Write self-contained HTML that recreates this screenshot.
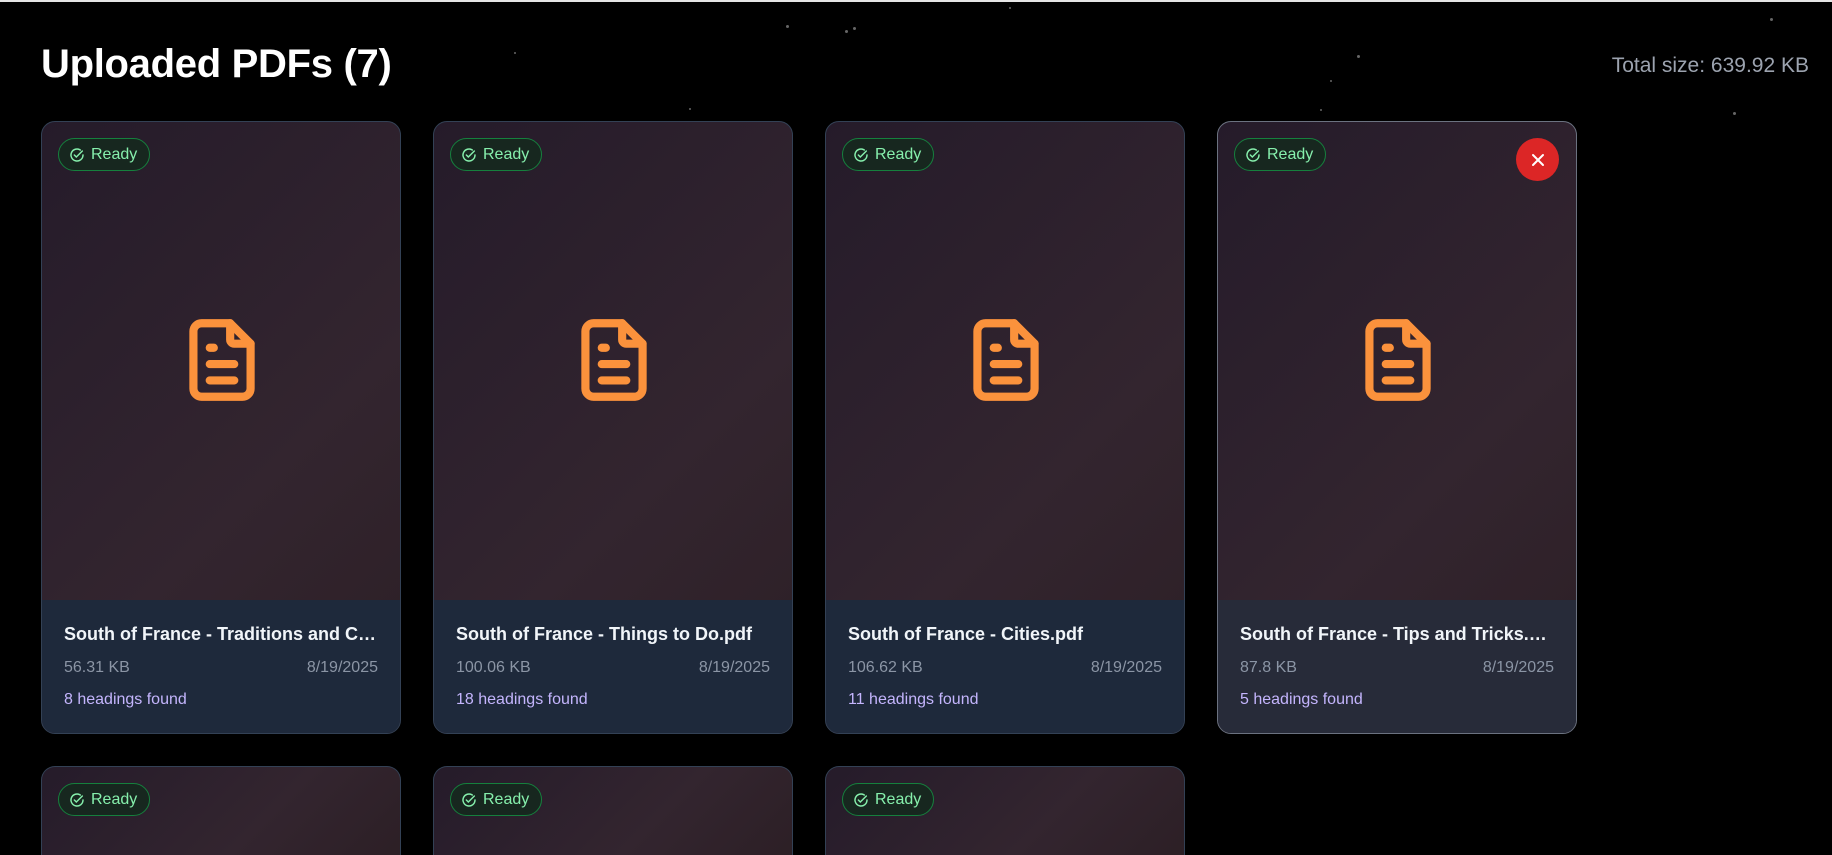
<!DOCTYPE html>
<html><head><meta charset="utf-8"><style>
*{box-sizing:border-box;margin:0;padding:0}
html{width:1832px;height:855px;overflow:hidden;background:#000}
body{width:1832px;height:855px;background:#000;font-family:"Liberation Sans",sans-serif;overflow:hidden;position:relative;border-top:2px solid #e5e5e5}
h1{position:absolute;left:41px;top:40px;font-size:40px;font-weight:bold;color:#fff;letter-spacing:-0.3px}
.total{position:absolute;right:23px;top:52px;font-size:21px;color:#9ca3af}
.star{position:absolute;width:3px;height:3px;border-radius:50%;background:#666}
.card{position:absolute;width:360px;height:613px;border:1px solid #334155;border-radius:14px;overflow:hidden;background:linear-gradient(135deg,#251b2a,#33252f 60%,#2c1f25)}
.card.b{height:100px;border-bottom:none;border-radius:14px 14px 0 0}
.card.h{border-color:#6b7280}
.badge{position:absolute;left:16px;top:16px;height:33px;padding:0 12px 0 10px;border:1px solid #15803d;border-radius:17px;background:#17271f;color:#86efac;font-size:16px;display:flex;align-items:center;gap:6px}
.icon{position:absolute;left:131px;top:189px}
.foot{position:absolute;left:0;right:0;top:478px;bottom:0;background:#1e293b;padding:0 22px}
.card.h .foot{background:#272b39}
.t{margin-top:24px;font-size:18px;font-weight:bold;color:#f1f5f9;white-space:nowrap;overflow:hidden;text-overflow:ellipsis}
.m{margin-top:14px;display:flex;justify-content:space-between;font-size:16px;color:#8b95a5}
.g{margin-top:14px;font-size:16px;color:#c4b5fd}
.x{position:absolute;right:17px;top:16px;width:43px;height:43px;border-radius:50%;background:#dc2626;color:#fff;display:flex;align-items:center;justify-content:center}
</style></head><body>
<h1>Uploaded PDFs (7)</h1>
<div class="total">Total size: 639.92 KB</div>
<div class="star" style="left:786px;top:23px"></div><div class="star" style="left:845px;top:28px"></div><div class="star" style="left:853px;top:25px"></div><div class="star" style="left:1009px;top:5px;width:2px;height:2px"></div><div class="star" style="left:1357px;top:53px"></div><div class="star" style="left:1330px;top:78px;width:2px;height:2px"></div><div class="star" style="left:1770px;top:16px"></div><div class="star" style="left:1733px;top:110px"></div><div class="star" style="left:1320px;top:107px;width:2px;height:2px"></div><div class="star" style="left:689px;top:106px;width:2px;height:2px"></div><div class="star" style="left:514px;top:50px;width:2px;height:2px"></div>
<div class="card" style="left:41px;top:119px"><div class="badge"><svg width="16" height="16" viewBox="0 0 24 24" fill="none" stroke="#86efac" stroke-width="2.2" stroke-linecap="round"><path d="M21 12a9 9 0 1 1-4-7.5"/><path d="M8 12l3 3 9-9"/></svg>Ready</div><svg class="icon" width="98" height="98" viewBox="0 0 24 24" fill="none" stroke="#fb923c" stroke-width="2" stroke-linecap="round" stroke-linejoin="round"><path d="M14 3v4a1 1 0 0 0 1 1h4"/><path d="M17 21h-10a2 2 0 0 1-2-2v-14a2 2 0 0 1 2-2h7l5 5v11a2 2 0 0 1-2 2z"/><path d="M9 9h1M9 13h6M9 17h6"/></svg><div class="foot"><div class="t">South of France - Traditions and Customs.pdf</div><div class="m"><span>56.31 KB</span><span>8/19/2025</span></div><div class="g">8 headings found</div></div></div>
<div class="card" style="left:433px;top:119px"><div class="badge"><svg width="16" height="16" viewBox="0 0 24 24" fill="none" stroke="#86efac" stroke-width="2.2" stroke-linecap="round"><path d="M21 12a9 9 0 1 1-4-7.5"/><path d="M8 12l3 3 9-9"/></svg>Ready</div><svg class="icon" width="98" height="98" viewBox="0 0 24 24" fill="none" stroke="#fb923c" stroke-width="2" stroke-linecap="round" stroke-linejoin="round"><path d="M14 3v4a1 1 0 0 0 1 1h4"/><path d="M17 21h-10a2 2 0 0 1-2-2v-14a2 2 0 0 1 2-2h7l5 5v11a2 2 0 0 1-2 2z"/><path d="M9 9h1M9 13h6M9 17h6"/></svg><div class="foot"><div class="t">South of France - Things to Do.pdf</div><div class="m"><span>100.06 KB</span><span>8/19/2025</span></div><div class="g">18 headings found</div></div></div>
<div class="card" style="left:825px;top:119px"><div class="badge"><svg width="16" height="16" viewBox="0 0 24 24" fill="none" stroke="#86efac" stroke-width="2.2" stroke-linecap="round"><path d="M21 12a9 9 0 1 1-4-7.5"/><path d="M8 12l3 3 9-9"/></svg>Ready</div><svg class="icon" width="98" height="98" viewBox="0 0 24 24" fill="none" stroke="#fb923c" stroke-width="2" stroke-linecap="round" stroke-linejoin="round"><path d="M14 3v4a1 1 0 0 0 1 1h4"/><path d="M17 21h-10a2 2 0 0 1-2-2v-14a2 2 0 0 1 2-2h7l5 5v11a2 2 0 0 1-2 2z"/><path d="M9 9h1M9 13h6M9 17h6"/></svg><div class="foot"><div class="t">South of France - Cities.pdf</div><div class="m"><span>106.62 KB</span><span>8/19/2025</span></div><div class="g">11 headings found</div></div></div>
<div class="card h" style="left:1217px;top:119px"><div class="badge"><svg width="16" height="16" viewBox="0 0 24 24" fill="none" stroke="#86efac" stroke-width="2.2" stroke-linecap="round"><path d="M21 12a9 9 0 1 1-4-7.5"/><path d="M8 12l3 3 9-9"/></svg>Ready</div><div class="x"><svg width="16" height="16" viewBox="0 0 16 16" stroke="#fff" stroke-width="2" stroke-linecap="round"><path d="M3 3l10 10M13 3L3 13"/></svg></div><svg class="icon" width="98" height="98" viewBox="0 0 24 24" fill="none" stroke="#fb923c" stroke-width="2" stroke-linecap="round" stroke-linejoin="round"><path d="M14 3v4a1 1 0 0 0 1 1h4"/><path d="M17 21h-10a2 2 0 0 1-2-2v-14a2 2 0 0 1 2-2h7l5 5v11a2 2 0 0 1-2 2z"/><path d="M9 9h1M9 13h6M9 17h6"/></svg><div class="foot"><div class="t">South of France - Tips and Tricks.pdf</div><div class="m"><span>87.8 KB</span><span>8/19/2025</span></div><div class="g">5 headings found</div></div></div>
<div class="card b" style="left:41px;top:764px"><div class="badge"><svg width="16" height="16" viewBox="0 0 24 24" fill="none" stroke="#86efac" stroke-width="2.2" stroke-linecap="round"><path d="M21 12a9 9 0 1 1-4-7.5"/><path d="M8 12l3 3 9-9"/></svg>Ready</div></div>
<div class="card b" style="left:433px;top:764px"><div class="badge"><svg width="16" height="16" viewBox="0 0 24 24" fill="none" stroke="#86efac" stroke-width="2.2" stroke-linecap="round"><path d="M21 12a9 9 0 1 1-4-7.5"/><path d="M8 12l3 3 9-9"/></svg>Ready</div></div>
<div class="card b" style="left:825px;top:764px"><div class="badge"><svg width="16" height="16" viewBox="0 0 24 24" fill="none" stroke="#86efac" stroke-width="2.2" stroke-linecap="round"><path d="M21 12a9 9 0 1 1-4-7.5"/><path d="M8 12l3 3 9-9"/></svg>Ready</div></div>
</body></html>
